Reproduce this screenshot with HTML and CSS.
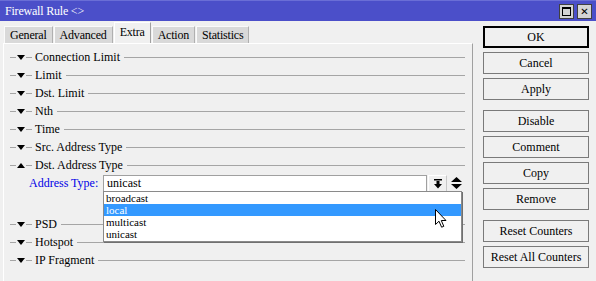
FILE: index.html
```html
<!DOCTYPE html>
<html lang="en">
<head>
    <meta charset="UTF-8">
    <title>Firewall Rule</title>
    <link rel="stylesheet" href="styles.css">
</head>
<body>

<div class="window">
    <div class="titlebar">
        <span class="title">Firewall Rule &lt;&gt;</span>
        <div class="win-controls">
            <span class="win-btn max"><span class="max-box"></span></span>
            <span class="win-btn close">&#x2715;</span>
        </div>
    </div>

    <div class="main">
        <div class="left">
            <div class="tabs">
                <div class="tab">General</div>
                <div class="tab">Advanced</div>
                <div class="tab active">Extra</div>
                <div class="tab">Action</div>
                <div class="tab">Statistics</div>
            </div>

            <div class="panel">
                <div class="section"><span class="dash"></span><span class="tri down"></span><span class="dash"></span><span class="caption">Connection Limit</span><span class="rule"></span></div>
                <div class="section"><span class="dash"></span><span class="tri down"></span><span class="dash"></span><span class="caption">Limit</span><span class="rule"></span></div>
                <div class="section"><span class="dash"></span><span class="tri down"></span><span class="dash"></span><span class="caption">Dst. Limit</span><span class="rule"></span></div>
                <div class="section"><span class="dash"></span><span class="tri down"></span><span class="dash"></span><span class="caption">Nth</span><span class="rule"></span></div>
                <div class="section"><span class="dash"></span><span class="tri down"></span><span class="dash"></span><span class="caption">Time</span><span class="rule"></span></div>
                <div class="section"><span class="dash"></span><span class="tri down"></span><span class="dash"></span><span class="caption">Src. Address Type</span><span class="rule"></span></div>
                <div class="section"><span class="dash"></span><span class="tri up"></span><span class="dash"></span><span class="caption">Dst. Address Type</span><span class="rule"></span></div>

                <div class="field-row">
                    <label class="field-label">Address Type:</label>
                    <div class="combo">
                        <div class="combo-value">unicast</div>
                        <div class="dropdown">
                            <div class="option">broadcast</div>
                            <div class="option selected">local</div>
                            <div class="option">multicast</div>
                            <div class="option">unicast</div>
                        </div>
                        <svg class="cursor" viewBox="0 0 12 19" width="12" height="19">
                            <path d="M0.5 0.5 L0.5 15.5 L4 12.2 L6.6 18.2 L8.8 17.3 L6.3 11.5 L11 11.5 Z" fill="#fff" stroke="#000" stroke-width="1"/>
                        </svg>
                    </div>
                    <span class="combo-btn">
                        <svg viewBox="0 0 10 10" width="10" height="10">
                            <rect x="1" y="0" width="8" height="1.5" fill="#000"/>
                            <path d="M3.5 2 H6.5 V5 H9 L5 9.5 L1 5 H3.5 Z" fill="#000"/>
                        </svg>
                    </span>
                    <span class="updown">
                        <svg viewBox="0 0 11 12" width="11" height="12">
                            <path d="M5.5 0 L11 5 H0 Z M0 7 H11 L5.5 12 Z" fill="#000"/>
                        </svg>
                    </span>
                </div>

                <div class="section"><span class="dash"></span><span class="tri down"></span><span class="dash"></span><span class="caption">PSD</span><span class="rule"></span></div>
                <div class="section"><span class="dash"></span><span class="tri down"></span><span class="dash"></span><span class="caption">Hotspot</span><span class="rule"></span></div>
                <div class="section"><span class="dash"></span><span class="tri down"></span><span class="dash"></span><span class="caption">IP Fragment</span><span class="rule"></span></div>
            </div>
        </div>

        <div class="buttons">
            <button class="btn default">OK</button>
            <button class="btn">Cancel</button>
            <button class="btn">Apply</button>
            <button class="btn group">Disable</button>
            <button class="btn">Comment</button>
            <button class="btn">Copy</button>
            <button class="btn">Remove</button>
            <button class="btn group">Reset Counters</button>
            <button class="btn">Reset All Counters</button>
        </div>
    </div>
</div>

</body>
</html>
```

FILE: styles.css
```css
* {
    margin: 0;
    padding: 0;
    box-sizing: border-box;
}
body {
    font-family: "Liberation Serif", "DejaVu Serif", serif;
    font-size: 12px;
    background-color: #f0f0f0;
    overflow: hidden;
}
.window {
    width: 596px;
    height: 281px;
    background: #f0f0f0;
    overflow: hidden;
}
.titlebar {
    height: 21px;
    background: #4b4fc9;
    border-top: 1px solid #6a6ed6;
    display: flex;
    align-items: center;
    justify-content: space-between;
    padding: 0 4px 0 5px;
}
.title {
    color: #fff;
    font-size: 12px;
    letter-spacing: -0.2px;
}
.win-controls {
    display: flex;
    gap: 3px;
}
.win-btn {
    width: 15px;
    height: 15px;
    background: #d4d4d4;
    border: 1px solid #404040;
    display: flex;
    justify-content: center;
    align-items: center;
    font-family: "DejaVu Sans", sans-serif;
    font-size: 10px;
    font-weight: bold;
    color: #000;
}
.max-box {
    width: 9px;
    height: 9px;
    border: 1px solid #000;
    border-top-width: 2px;
}
.main {
    display: flex;
}
.left {
    width: 473px;
}
.tabs {
    display: flex;
    align-items: flex-end;
    height: 22px;
    padding-left: 4px;
    gap: 1px;
}
.tab {
    height: 17px;
    line-height: 16px;
    padding: 0 5px;
    letter-spacing: -0.2px;
    background: #d9d9d9;
    border-left: 1px solid #fafafa;
    border-top: 1px solid #fafafa;
    border-right: 1px solid #b0b0b0;
}
.tab.active {
    height: 21px;
    line-height: 19px;
    background: #f0f0f0;
    border-left: 1px solid #fff;
    border-top: 1px solid #fff;
    border-right: 1px solid #a0a0a0;
}
.panel {
    margin-left: 3px;
    height: 240px;
    border-top: 1px solid #fff;
    border-left: 1px solid #fff;
    border-right: 1px solid #a0a0a0;
    padding: 4px 7px 0 6px;
}
.section {
    height: 18px;
    display: flex;
    align-items: center;
}
.dash {
    width: 6px;
    height: 1px;
    background: #a5a5a5;
}
.tri {
    width: 0;
    height: 0;
    margin: 0 1px;
    border-left: 4px solid transparent;
    border-right: 4px solid transparent;
}
.tri.down {
    border-top: 5px solid #000;
}
.tri.up {
    border-bottom: 5px solid #000;
}
.caption {
    margin: 0 4px 0 3px;
    color: #000;
}
.rule {
    flex: 1;
    height: 1px;
    background: #a5a5a5;
}
.field-row {
    height: 18px;
    display: flex;
    align-items: center;
    margin-bottom: 23px;
}
.field-label {
    width: 93px;
    padding-left: 19px;
    color: #0000e6;
}
.combo {
    position: relative;
    width: 324px;
    height: 17px;
}
.combo-value {
    height: 17px;
    line-height: 15px;
    padding-left: 3px;
    background: #fff;
    border: 1px solid #a0a0a0;
}
.dropdown {
    position: absolute;
    top: 16px;
    left: 0;
    width: 359px;
    height: 51px;
    background: #fff;
    border: 1px solid #8a8a8a;
    box-shadow: 1px 1px 0 #707070;
    z-index: 5;
}
.option {
    height: 12px;
    line-height: 12px;
    font-size: 11px;
    padding-left: 2px;
    overflow: hidden;
}
.option.selected {
    background: #3399ff;
    color: #fff;
}
.cursor {
    position: absolute;
    left: 332px;
    top: 34px;
    z-index: 6;
}
.combo-btn {
    width: 19px;
    height: 16px;
    margin-left: 1px;
    display: flex;
    justify-content: center;
    align-items: center;
    border-left: 1px solid #fff;
    border-top: 1px solid #fff;
    border-right: 1px solid #c8c8c8;
}
.updown {
    width: 11px;
    margin-left: 4px;
    display: flex;
}
.buttons {
    width: 106px;
    margin-left: 10px;
    padding-top: 5px;
    display: flex;
    flex-direction: column;
    gap: 4px;
}
.btn {
    height: 22px;
    width: 106px;
    background: #f0f0f0;
    border: 1px solid #7a7a7a;
    font-family: "Liberation Serif", "DejaVu Serif", serif;
    font-size: 12px;
    color: #000;
}
.btn.default {
    border: 2px solid #000;
}
.btn.group {
    margin-top: 6px;
}
```
